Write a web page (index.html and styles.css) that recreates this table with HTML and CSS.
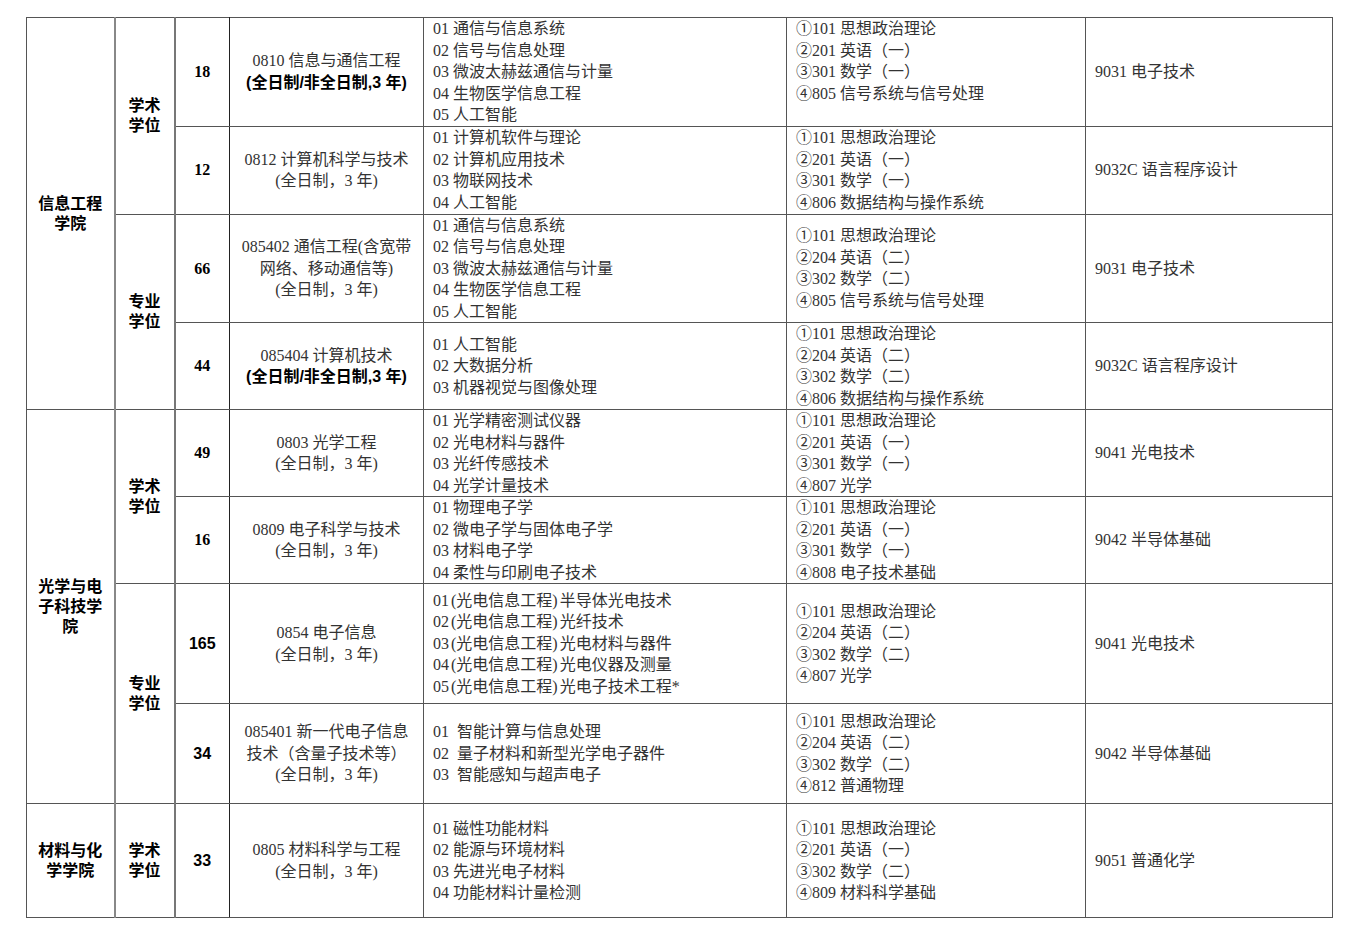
FILE: index.html
```html
<!DOCTYPE html>
<html lang="zh-CN">
<head>
<meta charset="utf-8">
<title>招生目录</title>
<link rel="stylesheet" href="styles.css">
</head>
<body>
<table class="cat">
  <colgroup>
    <col class="c1"><col class="c2"><col class="c3"><col class="c4"><col class="c5"><col class="c6"><col class="c7">
  </colgroup>
  <tbody>
    <tr class="r1">
      <td class="college" rowspan="4">信息工程<br>学院</td>
      <td class="degree" rowspan="2">学术<br>学位</td>
      <td class="num serif">18</td>
      <td class="prog">0810 信息与通信工程<br><b>(全日制/非全日制,3 年)</b></td>
      <td class="list">01 通信与信息系统<br>02 信号与信息处理<br>03 微波太赫兹通信与计量<br>04 生物医学信息工程<br>05 人工智能</td>
      <td class="list">①101 思想政治理论<br>②201 英语（一）<br>③301 数学（一）<br>④805 信号系统与信号处理<br>&nbsp;</td>
      <td class="extra">9031 电子技术</td>
    </tr>
    <tr class="r2">
      <td class="num serif">12</td>
      <td class="prog">0812 计算机科学与技术<br>(全日制，3 年)</td>
      <td class="list">01 计算机软件与理论<br>02 计算机应用技术<br>03 物联网技术<br>04 人工智能</td>
      <td class="list">①101 思想政治理论<br>②201 英语（一）<br>③301 数学（一）<br>④806 数据结构与操作系统</td>
      <td class="extra">9032C 语言程序设计</td>
    </tr>
    <tr class="r3">
      <td class="degree" rowspan="2">专业<br>学位</td>
      <td class="num serif">66</td>
      <td class="prog">085402 通信工程(含宽带<br>网络、移动通信等)<br>(全日制，3 年)</td>
      <td class="list">01 通信与信息系统<br>02 信号与信息处理<br>03 微波太赫兹通信与计量<br>04 生物医学信息工程<br>05 人工智能</td>
      <td class="list">①101 思想政治理论<br>②204 英语（二）<br>③302 数学（二）<br>④805 信号系统与信号处理</td>
      <td class="extra">9031 电子技术</td>
    </tr>
    <tr class="r4">
      <td class="num serif">44</td>
      <td class="prog">085404 计算机技术<br><b>(全日制/非全日制,3 年)</b></td>
      <td class="list">01 人工智能<br>02 大数据分析<br>03 机器视觉与图像处理</td>
      <td class="list">①101 思想政治理论<br>②204 英语（二）<br>③302 数学（二）<br>④806 数据结构与操作系统</td>
      <td class="extra">9032C 语言程序设计</td>
    </tr>
    <tr class="r5 sect">
      <td class="college" rowspan="4">光学与电<br>子科技学<br>院</td>
      <td class="degree" rowspan="2">学术<br>学位</td>
      <td class="num serif">49</td>
      <td class="prog">0803 光学工程<br>(全日制，3 年)</td>
      <td class="list">01 光学精密测试仪器<br>02 光电材料与器件<br>03 光纤传感技术<br>04 光学计量技术</td>
      <td class="list">①101 思想政治理论<br>②201 英语（一）<br>③301 数学（一）<br>④807 光学</td>
      <td class="extra">9041 光电技术</td>
    </tr>
    <tr class="r6">
      <td class="num serif">16</td>
      <td class="prog">0809 电子科学与技术<br>(全日制，3 年)</td>
      <td class="list">01 物理电子学<br>02 微电子学与固体电子学<br>03 材料电子学<br>04 柔性与印刷电子技术</td>
      <td class="list">①101 思想政治理论<br>②201 英语（一）<br>③301 数学（一）<br>④808 电子技术基础</td>
      <td class="extra">9042 半导体基础</td>
    </tr>
    <tr class="r7">
      <td class="degree" rowspan="2">专业<br>学位</td>
      <td class="num">165</td>
      <td class="prog">0854 电子信息<br>(全日制，3 年)</td>
      <td class="list paren">01 (光电信息工程) 半导体光电技术<br>02 (光电信息工程) 光纤技术<br>03 (光电信息工程) 光电材料与器件<br>04 (光电信息工程) 光电仪器及测量<br>05 (光电信息工程) 光电子技术工程*</td>
      <td class="list">①101 思想政治理论<br>②204 英语（二）<br>③302 数学（二）<br>④807 光学</td>
      <td class="extra">9041 光电技术</td>
    </tr>
    <tr class="r8">
      <td class="num">34</td>
      <td class="prog">085401 新一代电子信息<br>技术（含量子技术等）<br>(全日制，3 年)</td>
      <td class="list">01&nbsp;&nbsp;智能计算与信息处理<br>02&nbsp;&nbsp;量子材料和新型光学电子器件<br>03&nbsp;&nbsp;智能感知与超声电子</td>
      <td class="list">①101 思想政治理论<br>②204 英语（二）<br>③302 数学（二）<br>④812 普通物理</td>
      <td class="extra">9042 半导体基础</td>
    </tr>
    <tr class="r9 sect">
      <td class="college">材料与化<br>学学院</td>
      <td class="degree">学术<br>学位</td>
      <td class="num">33</td>
      <td class="prog">0805 材料科学与工程<br>(全日制，3 年)</td>
      <td class="list">01 磁性功能材料<br>02 能源与环境材料<br>03 先进光电子材料<br>04 功能材料计量检测</td>
      <td class="list">①101 思想政治理论<br>②201 英语（一）<br>③302 数学（二）<br>④809 材料科学基础</td>
      <td class="extra">9051 普通化学</td>
    </tr>
  </tbody>
</table>
</body>
</html>
```

FILE: styles.css
```css
html, body {
  margin: 0;
  padding: 0;
  background: #ffffff;
}

body {
  padding: 17px 0 0 26px;
  font-family: "Liberation Serif", "Noto Sans CJK SC", serif;
  color: #333333;
}

.cat {
  border-collapse: collapse;
  table-layout: fixed;
  width: 1306px;
  border: 1.5px solid #111;
}

.c1 { width: 88px; }
.c2 { width: 60px; }
.c3 { width: 55px; }
.c4 { width: 194px; }
.c5 { width: 363px; }
.c6 { width: 299px; }
.c7 { width: 247px; }

.cat td {
  border: 1px solid #555;
  padding: 0;
  vertical-align: middle;
  font-size: 16px;
  line-height: 21.5px;
}

.cat tr.sect td {
  border-top: 1.5px solid #111;
}

.r1 { height: 108px; }
.r2 { height: 88px; }
.r3 { height: 108px; }
.r4 { height: 87px; }
.r5 { height: 87px; }
.r6 { height: 87px; }
.r7 { height: 120px; }
.r8 { height: 100px; }
.r9 { height: 114px; }

.college {
  text-align: center;
  font-family: "Liberation Sans", "Noto Sans CJK SC", sans-serif;
  font-weight: 700;
  color: #000;
  line-height: 20px !important;
  border-right: 2px solid #888 !important;
}

.degree {
  text-align: center;
  font-family: "Liberation Sans", "Noto Sans CJK SC", sans-serif;
  font-weight: 700;
  color: #000;
  line-height: 20px !important;
  border-right: 2px solid #777 !important;
}

.num {
  text-align: center;
  font-family: "Liberation Sans", "Noto Sans CJK SC", sans-serif;
  font-weight: 700;
  color: #000;
  border-right: 1.5px solid #222 !important;
}

.num.serif {
  font-family: "Liberation Serif", "Noto Sans CJK SC", serif;
}

.prog {
  text-align: center;
  padding: 0 4px !important;
}

.prog b {
  font-family: "Liberation Sans", "Noto Sans CJK SC", sans-serif;
  font-weight: 700;
  color: #000;
}

.list {
  text-align: left;
  padding-left: 9px !important;
  white-space: nowrap;
}

.list.paren {
  word-spacing: -2px;
}

.extra {
  text-align: left;
  padding-left: 9px !important;
}
```
